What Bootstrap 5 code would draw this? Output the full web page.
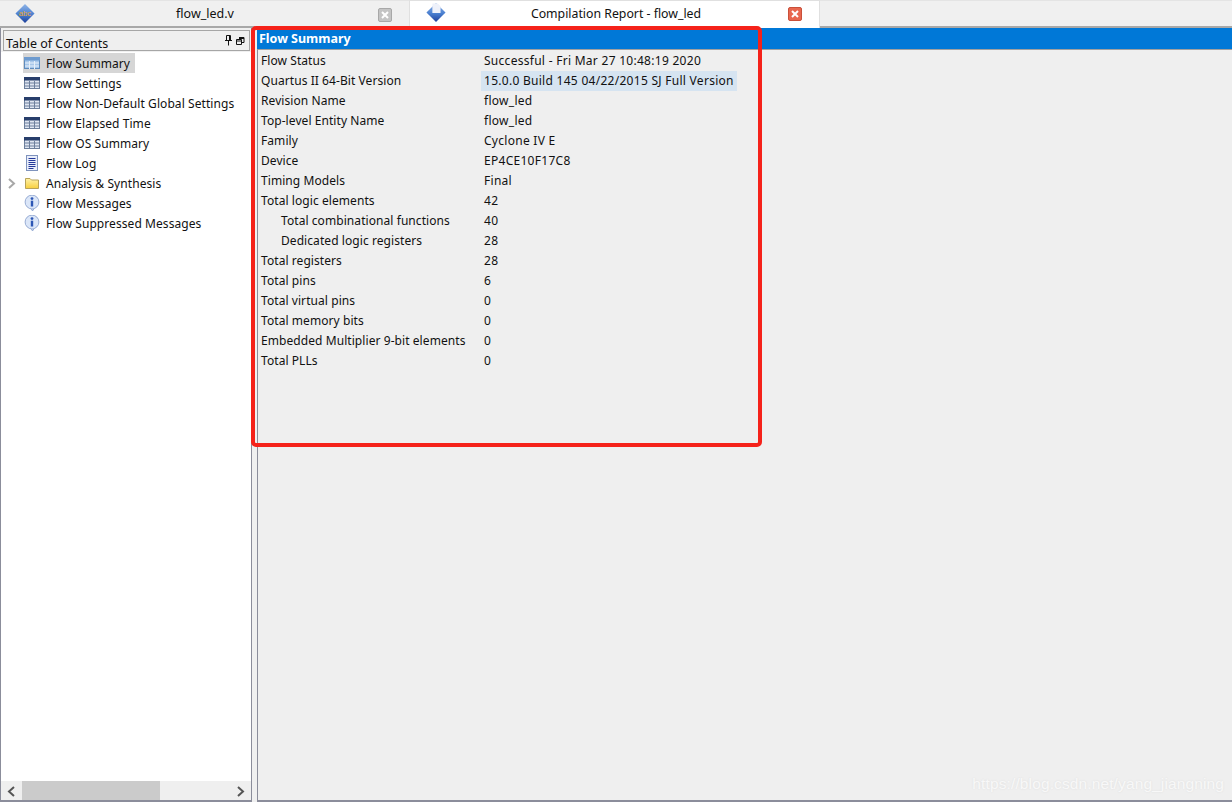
<!doctype html>
<html lang="en"><head><meta charset="utf-8"><title>Compilation Report - flow_led</title>
<link href="https://cdn.jsdelivr.net/npm/bootstrap@5.3.0/dist/css/bootstrap.min.css" rel="stylesheet">
<style>
html,body{height:802px;overflow:hidden}
body{background:#f0f0f0;color:#111;font:12px/20px "Noto Sans","Open Sans",sans-serif;position:relative}
.tabbar{height:28px;border-top:1px solid #e4e4e4;border-bottom:2px solid #a8a8a8;background:#f0f0f0}
.tabitem{width:409px;height:25px;position:relative}
.tabitem.on{width:411px;height:28px;margin-top:-1px;background:#fff;border:1px solid #e0e0e0;border-bottom:0;z-index:2}
.tabname{font-size:12.5px;line-height:26px}
.tabitem.on .tabname2{font-size:12.3px;margin-left:3px}
.tabicon{position:absolute;left:15px;top:3px}
.tabitem.on .tabicon{left:16px;top:2px}
.closer{position:absolute;left:378px;top:7px;width:14px;height:14px;border-radius:2px;background:#c4c4c4;border:1px solid #a8a8a8;color:#fff;display:flex;align-items:center;justify-content:center}
.tabitem.on .closer{left:378px;top:6px;background:#e8674f;border-color:#c9503a}
.mainarea{height:774px}
.tocpane{width:252px;height:774px;border:1px solid #8b8d9b;border-top:0;border-bottom:2px solid #8b8d9b;background:#fff}
.tochead{height:24px;background:#f0f0f0;padding:2px 1px 2px 2px}
.tocbox{height:21px;border:1px solid #a6a6a6;background:#efefef;font-size:12.5px;line-height:26px;padding-left:2px;overflow:hidden}
.pinbox{margin:3px 4px 0 0}
.toclist{padding-top:1px;min-height:0}
.tocrow{height:20px;position:relative;padding-left:45px;white-space:nowrap;line-height:21px;letter-spacing:.07px}
.tocrow svg{position:absolute;left:23px;top:2px}
.tocrow svg.arrow{left:6px;top:5px}
.picked{position:absolute;left:22px;top:0;width:112px;height:20px;background:#d6d6d6}
.tocrow span{position:relative}
.hscroll{height:19px;background:#efefef;position:relative}
.hthumb{position:absolute;left:21px;top:0;width:138px;height:19px;background:#cbcbcb}
.hscroll svg{position:absolute;top:5px}
.gutter{width:5px}
.sumpane{height:774px;min-width:0;border-bottom:2px solid #8b8d9b;background:#efefef}
.sumbar{height:21px;background:#0078d7;color:#fff;font-weight:700;font-size:12.5px;line-height:21px;padding-left:2px;flex:none}
.sumbody{border-left:1px solid #8b8d9b;border-top:1px solid #a0a0a0;padding-top:1px}
.sumrow{height:20px;padding-left:3px;white-space:nowrap;letter-spacing:.07px}
.sumkey{width:220px}
.sumrow.sub .sumkey{padding-left:20px}
.sumval{padding:0 3px;letter-spacing:.28px}
.sumval.hl{background:#d6e4f1}
.redmark{position:absolute;left:251px;top:26px;width:511px;height:421px;border:4px solid #f5221a;border-radius:5px;z-index:5;pointer-events:none}
.stamp{position:absolute;right:8px;top:773px;font:15.5px/22px "Liberation Sans",sans-serif;color:#f8f8f8;text-shadow:0 0 2px #dcdcdc;letter-spacing:.12px}
.tiny{font:400 8.5px "Liberation Sans",sans-serif}
</style></head>
<body>
<svg width="0" height="0" class="position-absolute"><defs>
<linearGradient id="dia" x1="0" y1="0" x2="0" y2="1"><stop offset="0" stop-color="#8fb4e6"/><stop offset=".55" stop-color="#4a7fd0"/><stop offset="1" stop-color="#1d3f9a"/></linearGradient>
<linearGradient id="fold" x1="0" y1="0" x2="0" y2="1"><stop offset="0" stop-color="#fff2a8"/><stop offset="1" stop-color="#f7cf3e"/></linearGradient>
<symbol id="tbl" viewBox="0 0 16 16"><rect x=".5" y="2.500" width="15" height="11" fill="#dfe6f2" stroke="#6d7f9c"/><rect x="0" y="2" width="16" height="3.500" fill="#283e6b"/><path d="M1 8h14M1 11h14M5.500 6v8M10.500 6v8" stroke="#6d7f9c" stroke-width="1"/></symbol>
<symbol id="tblon" viewBox="0 0 16 16"><rect x=".5" y="2.500" width="15" height="11" fill="#a9c8ea" stroke="#5f8cbd"/><rect x="0" y="2" width="16" height="3.500" fill="#6e9bcf"/><path d="M1 8h14M1 11h14M5.500 6v8M10.500 6v8" stroke="#e6f0fa" stroke-width="1"/></symbol>
<symbol id="inf" viewBox="0 0 16 16"><path d="M6.500 12.500 8.500 16 10.800 12.500z" fill="#cfdcf5" stroke="#8ea5cf" stroke-width=".9"/><circle cx="8" cy="7" r="6.900" fill="#dbe6f8" stroke="#8ea5cf" stroke-width=".9"/><path d="M7 12.500h3" stroke="#dbe6f8" stroke-width="1.500"/><circle cx="8" cy="3.600" r="1.400" fill="#2c56b5"/><rect x="6.800" y="5.700" width="2.400" height="5.800" fill="#2c56b5"/></symbol>
</defs></svg>

<div class="tabbar d-flex">
  <div class="tabitem text-center tabname">
    <svg class="tabicon" width="20" height="20" viewBox="0 0 22 22"><path d="M11 0 21.500 10.500 11 21 .5 10.500z" fill="url(#dia)"/><text x="11" y="13" text-anchor="middle" class="tiny" fill="#e8a93a">abc</text></svg>
    <span class="d-inline-block" style="margin-left:1px">flow_led.v</span>
    <div class="closer"><svg width="8" height="8" viewBox="0 0 8 8"><path d="M1 1l6 6M7 1l-6 6" stroke="#fff" stroke-width="2"/></svg></div>
  </div>
  <div class="tabitem on text-center tabname">
    <svg class="tabicon" width="20" height="20" viewBox="0 0 22 22"><path d="M11 0 21.500 10.500 11 21 .5 10.500z" fill="url(#dia)"/><path d="M7 .5h6l3 3V11H7z" fill="#eef1fa"/></svg>
    <span class="d-inline-block tabname2">Compilation Report - flow_led</span>
    <div class="closer"><svg width="8" height="8" viewBox="0 0 8 8"><path d="M1 1l6 6M7 1l-6 6" stroke="#fff" stroke-width="2"/></svg></div>
  </div>
</div>

<div class="mainarea d-flex">
  <div class="tocpane d-flex flex-column flex-shrink-0">
    <div class="tochead"><div class="tocbox d-flex justify-content-between"><span>Table of Contents</span>
      <svg class="pinbox" width="21" height="12" viewBox="0 0 21 12"><path d="M2.500 1.500h4v5h-4zM1 6.500h7M4.500 7v4.500M5.500 1.500v5" fill="none" stroke="#111"/><path d="M12.500 5.500h5v5h-5zM12.500 7h5M15 3.500h5v5h-2.500M15 4.500h5" fill="none" stroke="#111"/></svg></div></div>
    <div class="toclist flex-grow-1">
      <div class="tocrow"><div class="picked"></div><svg width="16" height="16"><use href="#tblon"/></svg><span>Flow Summary</span></div>
      <div class="tocrow"><svg width="16" height="16"><use href="#tbl"/></svg><span>Flow Settings</span></div>
      <div class="tocrow"><svg width="16" height="16"><use href="#tbl"/></svg><span>Flow Non-Default Global Settings</span></div>
      <div class="tocrow"><svg width="16" height="16"><use href="#tbl"/></svg><span>Flow Elapsed Time</span></div>
      <div class="tocrow"><svg width="16" height="16"><use href="#tbl"/></svg><span>Flow OS Summary</span></div>
      <div class="tocrow"><svg width="16" height="16" viewBox="0 0 16 16"><rect x="2.500" y=".5" width="11" height="15" fill="#e9eefa" stroke="#7f93bd"/><path d="M4.500 3.500h7M4.500 5.500h7M4.500 7.500h7M4.500 9.500h7M4.500 11.500h7M4.500 13.500h5" stroke="#23389a" stroke-width="1"/></svg><span>Flow Log</span></div>
      <div class="tocrow"><svg class="arrow" width="9" height="11" viewBox="0 0 9 11"><path d="M2 1l5 4.500L2 10" fill="none" stroke="#a8a8a8" stroke-width="2"/></svg><svg width="16" height="16" viewBox="0 0 16 16"><path d="M1.500 13.500v-10h4.500l1.500 1.500h7v8.500z" fill="url(#fold)" stroke="#b8a35a"/></svg><span>Analysis &amp; Synthesis</span></div>
      <div class="tocrow"><svg width="16" height="16"><use href="#inf"/></svg><span>Flow Messages</span></div>
      <div class="tocrow"><svg width="16" height="16"><use href="#inf"/></svg><span>Flow Suppressed Messages</span></div>
    </div>
    <div class="hscroll"><div class="hthumb"></div>
      <svg style="left:6px" width="9" height="11" viewBox="0 0 9 11"><path d="M7 1 2 5.500 7 10" fill="none" stroke="#555" stroke-width="2"/></svg>
      <svg style="left:235px" width="9" height="11" viewBox="0 0 9 11"><path d="M2 1l5 4.500L2 10" fill="none" stroke="#555" stroke-width="2"/></svg>
    </div>
  </div>
  <div class="gutter flex-shrink-0"></div>
  <div class="sumpane flex-grow-1 d-flex flex-column">
    <div class="sumbar">Flow Summary</div>
    <div class="sumbody flex-grow-1">
      <div class="sumrow d-flex"><div class="sumkey">Flow Status</div><div class="sumval">Successful - Fri Mar 27 10:48:19 2020</div></div>
      <div class="sumrow d-flex"><div class="sumkey">Quartus II 64-Bit Version</div><div class="sumval hl">15.0.0 Build 145 04/22/2015 SJ Full Version</div></div>
      <div class="sumrow d-flex"><div class="sumkey">Revision Name</div><div class="sumval">flow_led</div></div>
      <div class="sumrow d-flex"><div class="sumkey">Top-level Entity Name</div><div class="sumval">flow_led</div></div>
      <div class="sumrow d-flex"><div class="sumkey">Family</div><div class="sumval">Cyclone IV E</div></div>
      <div class="sumrow d-flex"><div class="sumkey">Device</div><div class="sumval">EP4CE10F17C8</div></div>
      <div class="sumrow d-flex"><div class="sumkey">Timing Models</div><div class="sumval">Final</div></div>
      <div class="sumrow d-flex"><div class="sumkey">Total logic elements</div><div class="sumval">42</div></div>
      <div class="sumrow sub d-flex"><div class="sumkey">Total combinational functions</div><div class="sumval">40</div></div>
      <div class="sumrow sub d-flex"><div class="sumkey">Dedicated logic registers</div><div class="sumval">28</div></div>
      <div class="sumrow d-flex"><div class="sumkey">Total registers</div><div class="sumval">28</div></div>
      <div class="sumrow d-flex"><div class="sumkey">Total pins</div><div class="sumval">6</div></div>
      <div class="sumrow d-flex"><div class="sumkey">Total virtual pins</div><div class="sumval">0</div></div>
      <div class="sumrow d-flex"><div class="sumkey">Total memory bits</div><div class="sumval">0</div></div>
      <div class="sumrow d-flex"><div class="sumkey">Embedded Multiplier 9-bit elements</div><div class="sumval">0</div></div>
      <div class="sumrow d-flex"><div class="sumkey">Total PLLs</div><div class="sumval">0</div></div>
    </div>
  </div>
</div>
<div class="redmark"></div>
<div class="stamp">https://blog.csdn.net/yang_jiangning</div>
</body></html>
